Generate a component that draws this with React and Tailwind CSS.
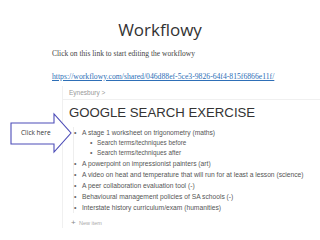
import React from 'react';

const items = [
  { text: 'A stage 1 worksheet on trigonometry (maths)', children: ['Search terms/techniques before', 'Search terms/techniques after'] },
  { text: 'A powerpoint on impressionist painters (art)' },
  { text: 'A video on heat and temperature that will run for at least a lesson (science)' },
  { text: 'A peer collaboration evaluation tool (-)' },
  { text: 'Behavioural management policies of SA schools (-)' },
  { text: 'Interstate history curriculum/exam (humanities)' },
];

function ClickArrow() {
  return (
    <div className="absolute left-[10px] top-[112px] w-[64px] h-[44px]">
      <svg width="64" height="44" viewBox="0 0 64 44" className="absolute inset-0">
        <polygon points="1,11 44,11 44,2 61,21 44,40 44,32 1,32" fill="white" stroke="#4d4db8" strokeWidth="1.1" />
      </svg>
      <span className="absolute left-[11px] top-[15px] text-[6.5px] leading-[12px] text-[#333] font-['Open_Sans',sans-serif]">Click here</span>
    </div>
  );
}

export default function App() {
  return (
    <div className="relative w-[320px] h-[240px] bg-white overflow-hidden">
      <h1 className="pt-[19px] text-center text-[17px] leading-[22px] text-[#333] font-['Open_Sans',sans-serif]">Workflowy</h1>

      <div className="pl-[52px] font-['Liberation_Serif',serif] leading-[10px]">
        <p className="mt-[8px] text-[7.5px] text-[#444]">Click on this link to start editing the workflowy</p>
        <p className="mt-[13px] text-[7.7px] text-[#2e6fb7] underline">https://workflowy.com/shared/046d88ef-5ce3-9826-64f4-815f6866e11f/</p>
      </div>

      <div className="mt-[4px] ml-[62px] border-l border-[#f0f0f0] font-['Liberation_Sans',sans-serif]">
        <div className="pl-[6px] pt-[2px] pb-[2px] border-b border-[#f0f0f0] text-[6.5px] leading-[9px] text-[#999]">Eynesbury &gt;</div>
        <h2 className="pl-[6px] mt-[6px] text-[13.2px] leading-[14px] text-[#333]">GOOGLE SEARCH EXERCISE</h2>

        <ul className="mt-[7px] ml-[10px] border-l border-[#eeeeee] text-[6.7px] text-[#555]">
          {items.map((it) => (
            <li key={it.text}>
              <div className="flex items-center h-[11px] leading-[10px]">
                <span className="w-[8px] text-[7px] text-[#666]">•</span>
                <span>{it.text}</span>
              </div>
              {it.children && (
                <ul className="pl-[16px] text-[6.3px]">
                  {it.children.map((c) => (
                    <li key={c} className="flex items-center h-[10px] leading-[10px]">
                      <span className="w-[7px] text-[7px] text-[#666]">•</span>
                      <span>{c}</span>
                    </li>
                  ))}
                </ul>
              )}
            </li>
          ))}
        </ul>
        <div className="mt-[5px] ml-[8px] flex items-center h-[10px] text-[5.5px] text-[#aaa]">
          <span className="w-[8px] text-[8px] leading-[8px] text-[#888]">+</span>
          <span>New item</span>
        </div>
      </div>

      <ClickArrow />
    </div>
  );
}
